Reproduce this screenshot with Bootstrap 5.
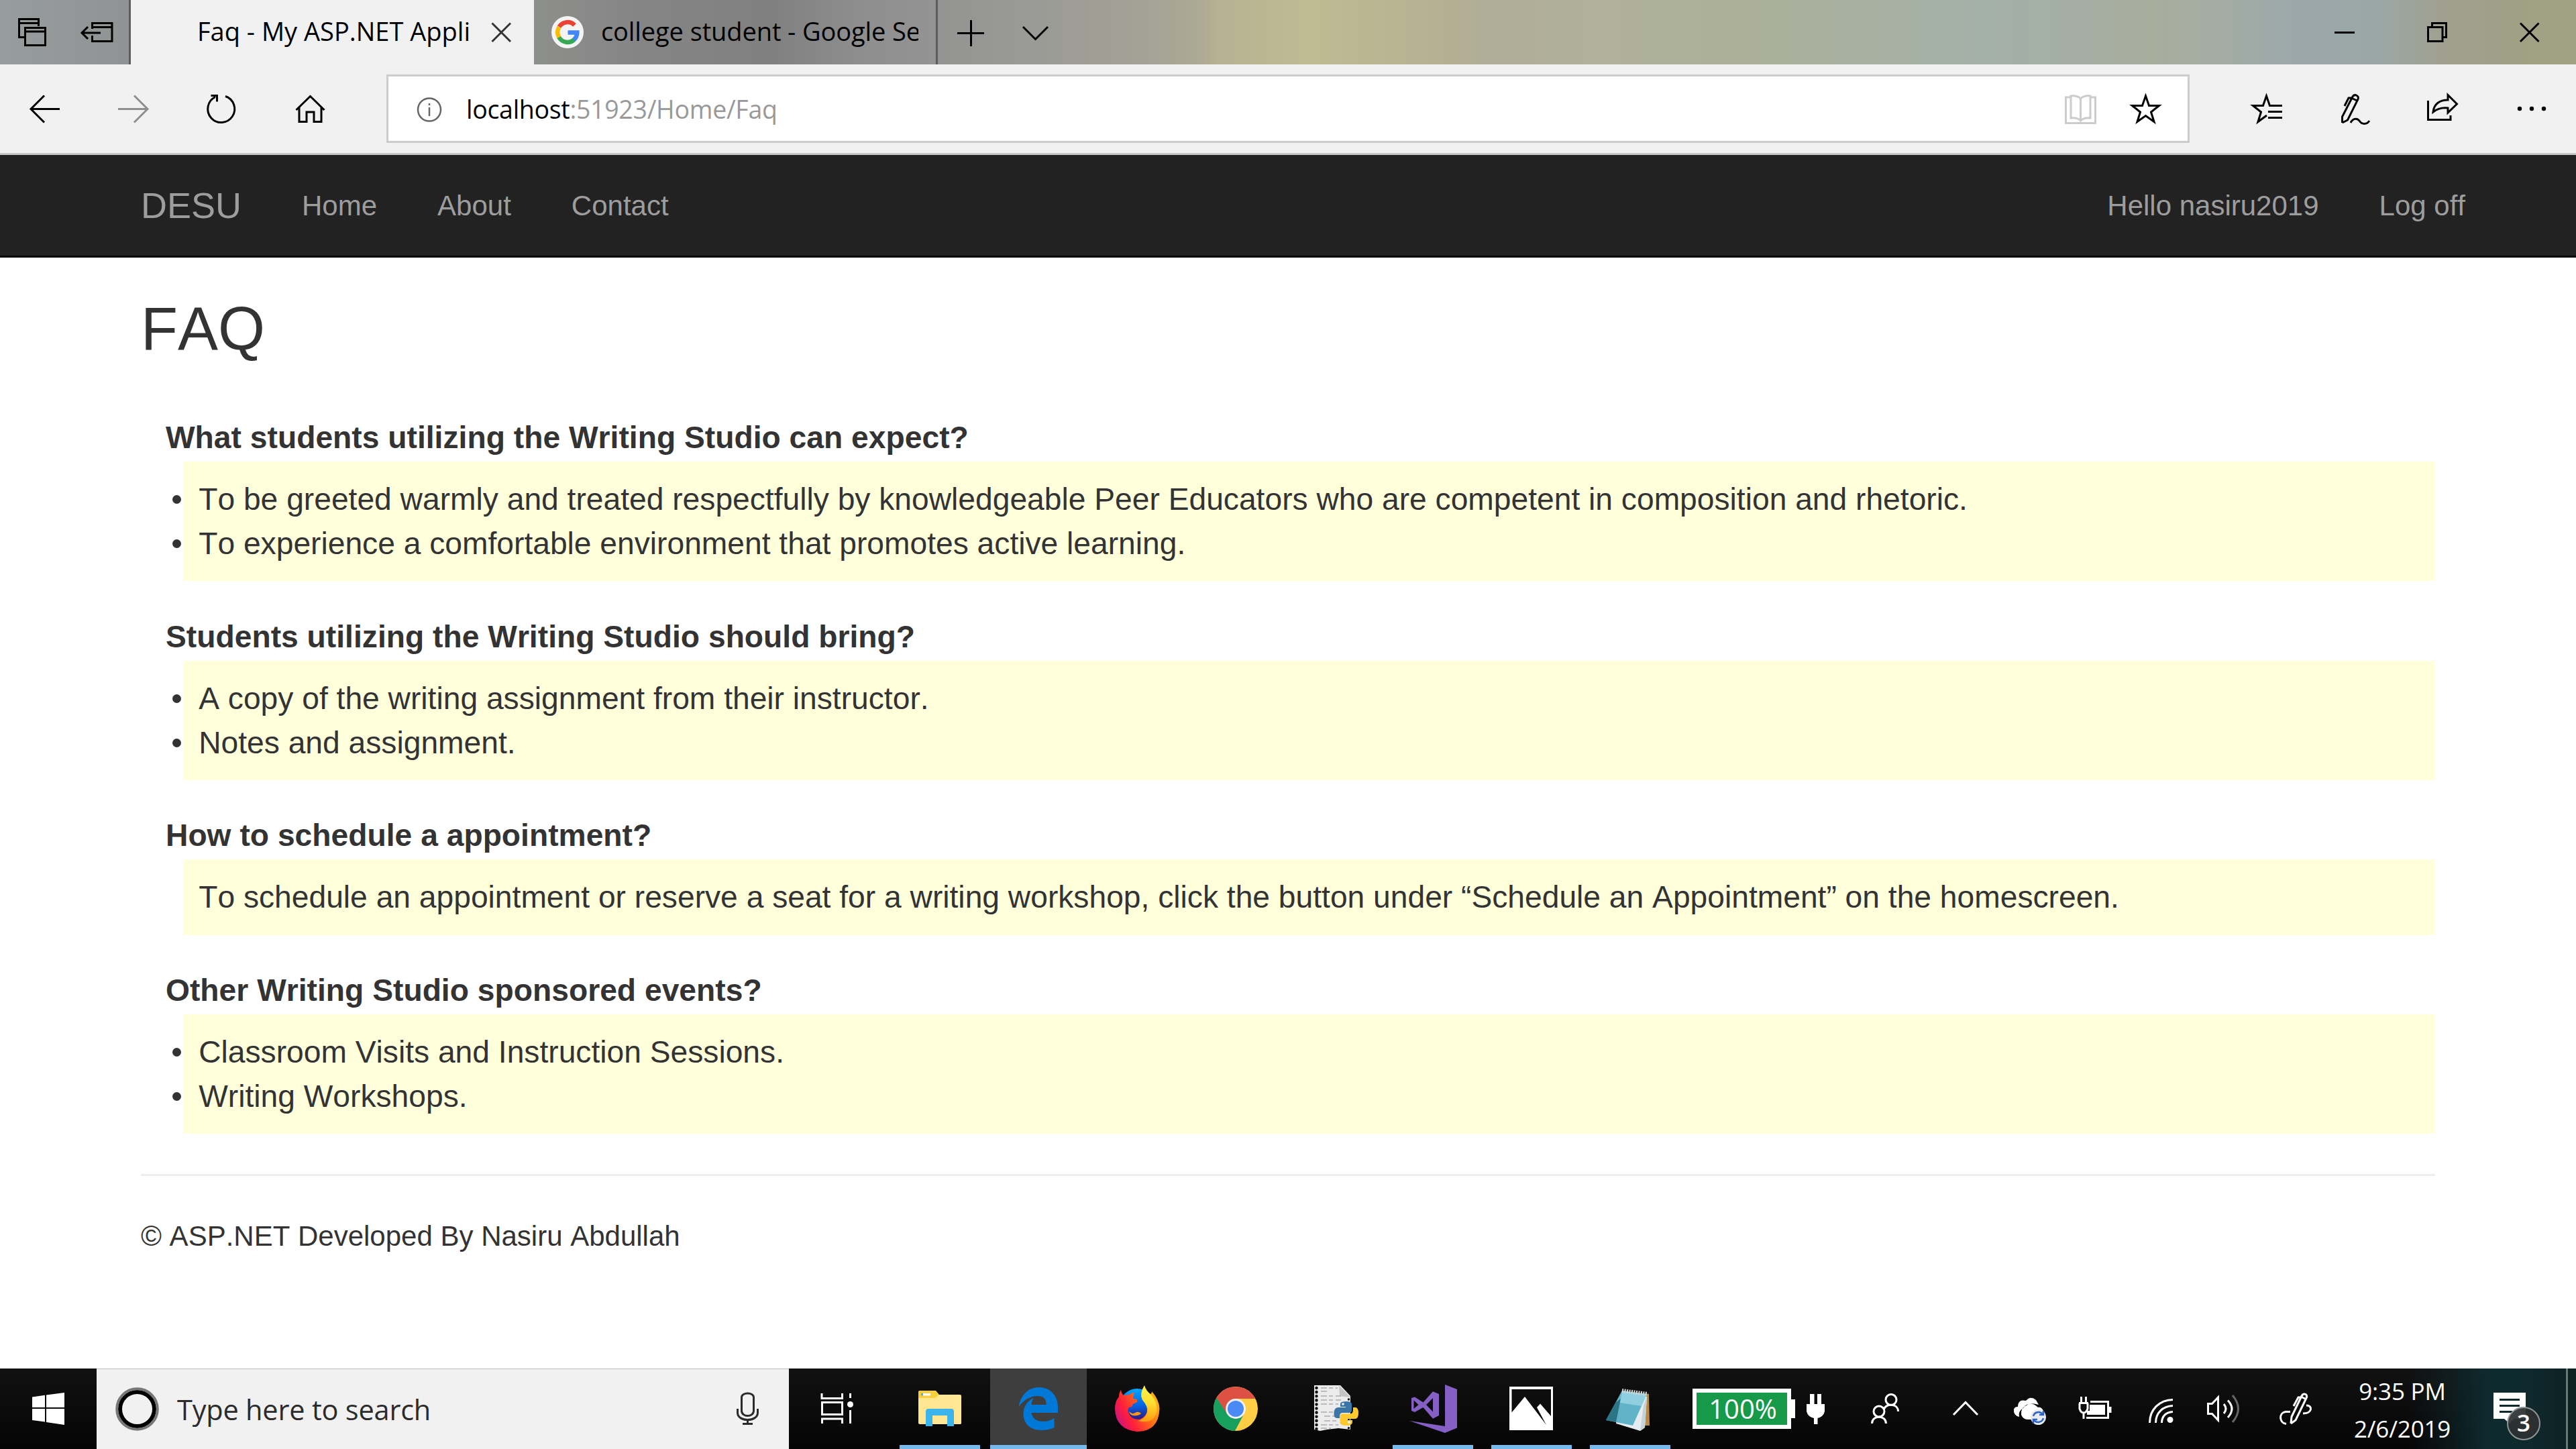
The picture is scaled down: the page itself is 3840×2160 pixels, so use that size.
<!DOCTYPE html>
<html lang="en">
<head>
<meta charset="utf-8">
<title>Faq - My ASP.NET Application</title>
<link href="https://cdn.jsdelivr.net/npm/bootstrap@5.3.0/dist/css/bootstrap.min.css" rel="stylesheet">
<style>
  html, body { height: 2160px; margin: 0; overflow: hidden; }
  body { width: 3840px; font-family: "Liberation Sans", Arial, sans-serif; font-kerning: none; color: #333; background: #fff; font-size: 42px; line-height: 60px; }
  svg { display: block; flex: none; }
  .ui { font-family: "Open Sans", "Noto Sans", sans-serif; white-space: nowrap; color: #000; font-kerning: normal; }
  .ln { fill: none; stroke: #000; stroke-width: 3; }
  .wl { fill: none; stroke: #fff; stroke-width: 3; }

  .tabstrip { height: 96px; background: linear-gradient(90deg, #979c9d 0, #909394 195px, #8d8f8c 800px, #858585 950px, #808080 1150px, #8e8e8f 1280px, #989896 1500px, #a3a296 1700px, #ada994 1790px, #b6b192 1812px, #bfbb92 1950px, #b6b192 2130px, #b1ac97 2220px, #afb299 2400px, #adb098 2560px, #a3b0a8 2960px, #a5aea3 3120px, #a8ad9c 3200px, #a6ada1 3270px, #9aa8ab 3440px, #9ba7a5 3550px, #a0a090 3640px, #a0a085 3760px, #a0a285 3840px); }
  .tab-on { width: 601px; background: #f1f1f1; padding-left: 99px; }
  .tab-off { width: 602px; border-right: 3px solid #5c5c5c; }
  .tab-name { font-size: 38px; line-height: 92px; overflow: hidden; }
  .tab-on .tab-name { width: 410px; }
  .tab-off .tab-name { width: 473px; margin-left: 2px; letter-spacing: -.1px; }
  .divide { border-right: 3px solid #5c5c5c; }
  .toolbar { height: 135px; background: #f1f1f1; border-bottom: 3px solid #c8c8c8; }
  .address { width: 2688px; height: 102px; border: 3px solid #ccc; background: #fff; }
  .url { font-size: 37.5px; line-height: 101px; letter-spacing: -.3px; padding-left: 2px; }
  .url-path { color: #999; }

  .site-nav { height: 153px; background: #222; border-bottom: 3px solid #080808; padding: 1px 165px 0 210px; color: #9d9d9d; }
  .site-nav .navbar-brand { font-size: 54px; line-height: 149px; margin: 0 90px 0 0; padding: 0; color: #9d9d9d; }
  .site-nav .nav-link { font-size: 42px; line-height: 149px; padding: 0; color: #9d9d9d; }
  .gap-nav { gap: 90px; }

  .page { padding: 57px 210px 0; }
  .page h2 { font-size: 90px; line-height: 99px; font-weight: 400; margin: 0 0 79px; }
  .faq { font-size: 46.2px; line-height: 66px; margin: 0 0 0 37px; }
  .faq dt { margin-bottom: 3px; letter-spacing: .02px; }
  .faq dd { background: #ffffdc; padding: 23.2px; margin: 0 0 49.2px 26px; }
  .faq dd:last-child { margin-bottom: 0; }
  .faq li { display: flex; align-items: center; }
  .faq li::before { content: ""; width: 13px; height: 13px; border-radius: 50%; background: #333; margin: 1px 26px 0 -39px; }
  .page hr { margin: 60px 0 60px; border-top: 3px solid #eee; opacity: 1; }

  .taskbar { height: 120px; background: linear-gradient(90deg, rgba(15,42,46,0) 0, rgba(15,42,46,0) 3590px, rgba(15,42,46,.55) 3660px, #0f2a2e 3710px, #0f2a2d 3760px, #0e2022 3840px), linear-gradient(#111 0, #0b0b0b 50%, #050505 100%); }
  .search { width: 1032px; background: #f1f1f1; border-top: 1px solid #b8bcb8; }
  .search .ui { font-size: 41.5px; line-height: 121px; color: #2b2b2b; letter-spacing: -.2px; padding-left: 1px; }
  .clock { width: 168px; font-size: 35px; line-height: 56px; color: #fff; text-align: center; letter-spacing: -.2px; padding-top: 6px; }
  .pct { width: 147px; height: 60px; border: 6px solid #fff; background: #169a49; color: #fff; font-size: 40px; line-height: 48px; text-align: center; padding-left: 3px; }
  .count { width: 50px; height: 50px; border-radius: 50%; left: 56px; top: 57px; background: rgba(45,48,50,.93); border: 2px solid #909596; color: #fff; font-size: 35px; line-height: 44px; font-weight: 600; text-align: center; }
  .show-desktop { border-left: 3px solid #6c7779; }
</style>
<script src="https://cdn.jsdelivr.net/npm/bootstrap@5.3.0/dist/js/bootstrap.bundle.min.js"></script>
</head>
<body class="d-flex flex-column">

<!-- Browser tab strip -->
<div class="tabstrip d-flex flex-shrink-0">
  <svg width="96" height="96" viewBox="0 0 96 96"><path class="ln" d="M37 55.500H28.500V28.500H57.500V39M28 34.500H58M37.500 41.500H67.500V67.500H37.500ZM37 47H68"/></svg>
  <div class="divide"><svg width="96" height="96" viewBox="96 0 96 96"><path class="ln" d="M137.500 43V34.500H167V61.500H137.500V53M137 40.500H167M122 49H150M131 40L122 49L131 58"/></svg></div>
  <div class="tab-on d-flex">
    <div class="tab-name ui">Faq - My ASP.NET Appli</div>
    <svg class="ms-auto" width="92" height="96" viewBox="704 0 92 96"><path fill="none" stroke="#333" stroke-width="3" d="M733.500 34.500L761 62M761 34.500L733.500 62"/></svg>
  </div>
  <div class="tab-off d-flex">
    <svg width="98" height="96" viewBox="796 0 98 96"><circle cx="846" cy="48" r="24" fill="#f4f4f4"/>
      <g fill="none" stroke-width="6.500" transform="translate(-1 0)"><path stroke="#ea4335" d="M834.500 40A14.700 14.700 0 0 1 857.500 37.500"/><path stroke="#fbbc05" d="M834.500 40.200A14.700 14.700 0 0 0 834.500 55.800"/><path stroke="#34a853" d="M834.200 55.500A14.700 14.700 0 0 0 857 59"/><path stroke="#4285f4" d="M856.500 59.300A14.700 14.700 0 0 0 861.300 48.600H847.500"/></g></svg>
    <div class="tab-name ui">college student - Google Search</div>
  </div>
  <svg width="96" height="96" viewBox="1398 0 96 96"><path class="ln" d="M1427 49.500H1467M1447.500 30V69"/></svg>
  <svg width="96" height="96" viewBox="1494 0 96 96"><path class="ln" d="M1525 40L1543.500 58.500L1562 40"/></svg>
  <div class="d-flex ms-auto">
    <svg width="138" height="96" viewBox="3426 0 138 96"><path class="ln" d="M3480 48.500H3510"/></svg>
    <svg width="138" height="96" viewBox="3564 0 138 96"><path class="ln" d="M3619.500 40.500H3641V61.500H3619.500ZM3625.500 40V34.500H3646.500V55.500H3641"/></svg>
    <svg width="138" height="96" viewBox="3702 0 138 96"><path class="ln" d="M3757 34.500L3784.500 62M3784.500 34.500L3757 62"/></svg>
  </div>
</div>

<!-- Browser toolbar -->
<div class="toolbar d-flex align-items-center flex-shrink-0">
  <svg width="132" height="132" viewBox="0 96 132 132"><path class="ln" d="M89 162.500H46M66 142.500L46 162.500L66 182.500"/></svg>
  <svg width="132" height="132" viewBox="132 96 132 132"><path fill="none" stroke="#8f8f8f" stroke-width="3" d="M176 162.500H220M200 142.500L220 162.500L200 182.500"/></svg>
  <svg width="132" height="132" viewBox="264 96 132 132"><path class="ln" d="M336 143.500A20 20 0 1 1 321 144.500M314.500 142.500H323.500V151.500"/></svg>
  <svg width="180" height="132" viewBox="396 96 180 132"><path class="ln" d="M441.500 164L462.500 143.500L483.500 164M446 160V181.500H457V167H468V181.500H479V160"/></svg>
  <div class="address d-flex align-items-center">
    <svg width="114" height="96" viewBox="579 114 114 96"><circle cx="640" cy="163.500" r="17" fill="none" stroke="#666" stroke-width="2.500"/><path d="M640 160V173M640 154V157" stroke="#666" stroke-width="2.500"/></svg>
    <div class="url ui"><span>localhost</span><span class="url-path">:51923/Home/Faq</span></div>
    <div class="d-flex ms-auto">
      <svg width="96" height="96" viewBox="3054 114 96 96"><path d="M3087 145H3079.500V183.500H3123.500V145H3116M3101.500 147C3097 142.500 3091 142.500 3087 143V176C3092 175.500 3098 176 3101.500 180C3105 176 3111 175.500 3116 176V143C3112 142.500 3106 142.500 3101.500 147ZM3101.500 147V180" fill="none" stroke="#ccc" stroke-width="3"/></svg>
      <svg width="111" height="96" viewBox="3150 114 111 96"><path class="ln" d="M3198.500 143L3203.500 157.500H3218.500L3206.500 167L3211 181.500L3198.500 172.500L3186 181.500L3190.500 167L3178.500 157.500H3193.500Z"/></svg>
    </div>
  </div>
  <div class="d-flex ms-auto">
    <svg width="132" height="132" viewBox="3312 96 132 132"><path class="ln" d="M3402 157.500H3383.500L3378.500 143L3373.500 157.500H3358.500L3370.500 167L3366 181.500L3379 172M3381 166.500H3402M3381 175.500H3402"/></svg>
    <svg width="132" height="132" viewBox="3444 96 132 132"><path class="ln" d="M3491.500 183V174L3507 144C3510 139 3517 143 3515 148L3499.500 179L3491.500 183M3495 158L3501 146H3507M3505 146L3513.500 150M3504 183C3507 177 3513 175 3517 180C3521 186 3528 186 3532 180"/></svg>
    <svg width="132" height="132" viewBox="3576 96 132 132"><path class="ln" d="M3619.500 150V178.500H3653V172M3627 167C3628 155 3637 149 3649 149V141.500L3662.500 155L3649 168V161C3640 160 3632 163 3627 167Z"/></svg>
    <svg width="132" height="132" viewBox="3708 96 132 132"><circle cx="3756" cy="162" r="3.200"/><circle cx="3774" cy="162" r="3.200"/><circle cx="3792" cy="162" r="3.200"/></svg>
  </div>
</div>

<!-- Site navigation -->
<nav class="site-nav d-flex flex-shrink-0">
  <a class="navbar-brand" href="#">DESU</a>
  <div class="d-flex gap-nav">
    <a class="nav-link" href="#">Home</a><a class="nav-link" href="#">About</a><a class="nav-link" href="#">Contact</a>
  </div>
  <div class="d-flex gap-nav ms-auto">
    <a class="nav-link" href="#">Hello nasiru2019</a><a class="nav-link" href="#">Log off</a>
  </div>
</nav>

<!-- Page content -->
<main class="page flex-grow-1">
  <h2>FAQ</h2>
  <dl class="faq">
    <dt>What students utilizing the Writing Studio can expect?</dt>
    <dd><ul class="list-unstyled m-0"><li>To be greeted warmly and treated respectfully by knowledgeable Peer Educators who are competent in composition and rhetoric.</li><li>To experience a comfortable environment that promotes active learning.</li></ul></dd>
    <dt>Students utilizing the Writing Studio should bring?</dt>
    <dd><ul class="list-unstyled m-0"><li>A copy of the writing assignment from their instructor.</li><li>Notes and assignment.</li></ul></dd>
    <dt>How to schedule a appointment?</dt>
    <dd>To schedule an appointment or reserve a seat for a writing workshop, click the button under “Schedule an Appointment” on the homescreen.</dd>
    <dt>Other Writing Studio sponsored events?</dt>
    <dd><ul class="list-unstyled m-0"><li>Classroom Visits and Instruction Sessions.</li><li>Writing Workshops.</li></ul></dd>
  </dl>
  <hr>
  <footer>© ASP.NET Developed By Nasiru Abdullah</footer>
</main>

<!-- Desktop taskbar -->
<div class="taskbar d-flex flex-shrink-0">
  <svg width="144" height="120" viewBox="0 2040 144 120"><path fill="#fff" d="M48 2082.500L67 2079.700V2098H48ZM69 2079.400L96 2076V2098H69ZM48 2100H67V2119.500L48 2117ZM69 2100H96V2124L69 2120Z"/></svg>
  <div class="search d-flex">
    <svg width="119" height="119" viewBox="144 2041 119 119"><circle cx="204.500" cy="2100.500" r="25.500" fill="none" stroke="#000" stroke-width="6"/><circle cx="204.500" cy="2100.500" r="30.300" fill="none" stroke="#777" stroke-width="4"/></svg>
    <div class="ui">Type here to search</div>
    <svg class="ms-auto" width="120" height="119" viewBox="1056 2041 120 119"><path fill="none" stroke="#2b2b2b" stroke-width="3" d="M1105.500 2083C1105.500 2075 1123.500 2075 1123.500 2083V2103C1123.500 2113 1105.500 2113 1105.500 2103ZM1099.500 2100V2106C1099.500 2120 1129.500 2120 1129.500 2106V2100M1114.500 2116V2123M1107 2122.500H1122"/></svg>
  </div>
  <svg width="153" height="120" viewBox="1176 2040 153 120"><path class="wl" d="M1225 2077V2084.500H1255.500V2077M1225.500 2090.500H1255.500V2108.500H1225.500ZM1225.500 2122V2115H1255.500V2122M1267.500 2077V2084M1267.500 2102V2122"/><circle cx="1267.500" cy="2093.500" r="4.500" fill="#fff"/></svg>
  <svg width="147" height="120" viewBox="1329 2040 147 120"><path fill="#fbce3c" d="M1369 2074.500Q1369 2073 1371 2073H1395L1400 2079H1430V2100H1369Z"/><path fill="#ffe693" d="M1369 2104V2084H1394L1400 2079H1431Q1433 2079 1433 2081V2121.500Q1433 2123 1431 2123H1371Q1369 2123 1369 2121Z"/><path fill="#fff" d="M1373 2077H1387V2080.500H1373Z"/><path fill="#3ab4ea" d="M1373 2077H1376V2080.500H1373ZM1380 2126V2104Q1380 2100 1384 2100H1418Q1422 2100 1422 2104V2126H1412V2110H1390V2126Z"/><path fill="#76b9ed" d="M1341 2154H1461V2160H1341Z"/></svg>
  <svg width="144" height="120" viewBox="1476 2040 144 120"><path fill="#3e3e3e" d="M1476 2040H1620V2160H1476Z"/><path fill="#76b9ed" d="M1476 2154H1620V2160H1476Z"/><path fill="#0078d7" d="M1518.500 2097C1521 2081 1532 2068 1549 2068C1567 2068 1577 2082 1577 2097V2106H1537.500C1539 2115 1546 2119 1555 2119C1561 2119 1567 2117 1571.500 2114V2128C1565 2131 1559 2132 1552 2132C1535 2132 1525.500 2121 1525.500 2108C1525.500 2097 1531 2088 1541 2084C1538.500 2087 1537.800 2091 1537.500 2094H1559.500C1560 2085 1555 2081 1547 2081C1535 2081 1525 2088 1518.500 2097Z"/></svg>
  <svg width="150" height="120" viewBox="1620 2040 150 120"><defs>
    <linearGradient id="fxa" x1="0" y1=".8" x2="1" y2=".3"><stop offset="0" stop-color="#c0128c"/><stop offset=".3" stop-color="#ff1e3c"/><stop offset=".65" stop-color="#ff6a16"/><stop offset="1" stop-color="#ffb51a"/></linearGradient>
    <linearGradient id="fxb" x1="0" y1="0" x2="0" y2="1"><stop offset="0" stop-color="#00a8ff"/><stop offset=".5" stop-color="#0560df"/><stop offset=".9" stop-color="#33137d"/></linearGradient>
    <linearGradient id="fxc" x1="0" y1="0" x2="0" y2="1"><stop offset="0" stop-color="#fff44f"/><stop offset=".5" stop-color="#ffdc30"/><stop offset="1" stop-color="#ff9a12"/></linearGradient></defs>
    <circle cx="1695" cy="2096" r="26" fill="url(#fxb)"/>
    <path fill="url(#fxa)" d="M1671 2072Q1672 2078 1675 2080Q1681 2079 1684 2079Q1687 2076 1691 2076Q1689 2081 1689 2085L1695 2086V2090L1689 2093L1687 2097Q1680 2097 1682 2105Q1685 2116 1698 2116Q1711 2112 1711 2096L1714 2079Q1718 2076 1717 2074Q1728 2087 1728.500 2100Q1727 2134 1695 2134Q1663 2131 1662 2100Q1662 2089 1668 2082Q1668 2076 1671 2072Z"/>
    <path fill="#ff980e" d="M1683 2104Q1688 2109 1692 2106Q1697 2103 1701 2107Q1697 2111 1689 2110Q1684 2109 1683 2104Z"/>
    <path fill="url(#fxc)" d="M1706 2065Q1698 2078 1703 2087Q1712 2097 1710 2106Q1706 2116 1696 2118Q1718 2124 1724 2106Q1727 2092 1716 2079Q1708 2073 1706 2065Z"/></svg>
  <svg width="147" height="120" viewBox="1770 2040 147 120"><circle cx="1842" cy="2100" r="33" fill="#ffce44"/><path fill="#dd5144" d="M1813.500 2083.500A33 33 0 0 1 1870.500 2083.500L1870.800 2085H1842L1828 2108Z"/><path fill="#17a05d" d="M1813.500 2083.500L1829 2107.500L1842 2115L1854.500 2107.500L1841 2133A33 33 0 0 1 1813.500 2083.500Z"/><circle cx="1842" cy="2100" r="15" fill="#f1f1f1"/><circle cx="1842" cy="2100" r="12" fill="#4a8af4"/></svg>
  <svg width="147" height="120" viewBox="1917 2040 147 120"><path fill="#ececec" d="M1959 2065H1998L2013 2081V2131L1995 2129L1978 2131L1968 2133L1959 2131Z"/><path fill="#c4c4c4" d="M1996 2065L1997 2081L2013 2083Z"/><path stroke="#111" stroke-width="4.500" stroke-linecap="round" stroke-dasharray=".1 6" d="M1962.500 2069V2132"/><path stroke="#111" stroke-width="3.500" stroke-linecap="round" stroke-dasharray=".1 6" d="M2010.500 2086V2132"/><path stroke="#aaa" stroke-width="1.500" stroke-dasharray="9 3 6 4" d="M1969 2069H1994M1969 2074H1978M1969 2081H1999M1969 2087H1999M1969 2093H1995M1969 2105H1990M1974 2111H1994M1974 2118H1995M1969 2124H1995M1969 2129H1984"/><path fill="#3a76a8" d="M1998 2098V2092Q1999 2089 2007 2089Q2015 2089 2015 2093V2102Q2015 2106 2011 2106H2002Q1997 2106 1997 2111V2114H1993Q1988 2114 1988.500 2106Q1989 2098 1995 2098H2006V2097H1998Z"/><path fill="#fdc92c" d="M2017 2098H2021Q2025 2099 2025 2106Q2025 2115 2020 2115H2008V2117H2016V2120Q2016 2125 2006.500 2125Q1997.500 2125 1997.500 2120V2112Q1997.500 2107.500 2002 2107.500H2012Q2017 2107.500 2017 2102Z"/><circle cx="2002" cy="2093" r="1.800" fill="#fff"/><circle cx="2011" cy="2120" r="2" fill="#fff"/></svg>
  <svg width="147" height="120" viewBox="2064 2040 147 120"><path fill="#865fc5" fill-rule="evenodd" d="M2154 2064L2172 2071V2128.500L2154 2136L2101 2118L2154 2126ZM2104 2084L2109 2082.500L2121.500 2090.500L2136 2074.300L2145 2078V2110L2136 2114.700L2121.500 2098L2109 2105L2104 2103ZM2107.500 2087.500V2100L2114.500 2094ZM2136 2084L2126 2094L2136 2104.500Z"/><path fill="#76b9ed" d="M2076 2154H2196V2160H2076Z"/></svg>
  <svg width="147" height="120" viewBox="2211 2040 147 120"><path fill="#fff" fill-rule="evenodd" d="M2250 2067H2315V2132H2250ZM2253.500 2071V2105.500L2273 2082L2305 2124L2291 2098L2296 2092.500L2312 2111V2071Z"/><path fill="#76b9ed" d="M2223 2154H2343V2160H2223Z"/></svg>
  <svg width="153" height="120" viewBox="2358 2040 153 120"><path fill="#b98a45" d="M2452 2077L2458 2078L2459 2125H2448Z"/><path fill="#e6edf0" d="M2415 2078L2455 2082L2452 2128L2445 2133L2409 2122Z"/><path fill="#c4d2d8" d="M2450 2095L2455 2082L2452 2128L2445 2133Z"/><path fill="#61b3c9" d="M2418 2073L2455 2078L2434 2125L2394 2117Z"/><path fill="#2c7587" d="M2408 2091L2416 2085L2409 2120L2394 2117Z"/><path fill="#a3dce8" opacity=".7" d="M2418 2073L2455 2078L2447 2096L2415 2091Z"/><path stroke="#d5d5d5" stroke-width="6" stroke-dasharray="2 1.500" d="M2418 2073L2456 2078"/><path fill="#76b9ed" d="M2370 2154H2490V2160H2370Z"/></svg>
  <div class="d-flex align-items-center ps-2 ms-1"><div class="pct ui">100%</div></div>
  <svg width="80" height="120" viewBox="2670 2040 80 120"><path fill="#fff" d="M2670 2086H2676V2114H2670ZM2698 2078H2704.500V2093H2709V2078H2715V2093H2720V2104Q2718 2112 2709.500 2114V2123H2704V2114Q2695 2112 2693 2104V2093H2698Z"/></svg>
  <svg width="120" height="120" viewBox="2750 2040 120 120"><circle class="wl" cx="2801" cy="2104" r="8"/><circle class="wl" cx="2819" cy="2086.500" r="8"/><path class="wl" d="M2790.500 2122C2790.500 2109 2811.500 2109 2811.500 2122M2808.500 2101C2810 2092 2829.500 2091 2829.500 2104"/></svg>
  <svg width="100" height="120" viewBox="2870 2040 100 120"><path class="wl" d="M2912 2109L2930 2090.500L2948 2109"/></svg>
  <svg width="100" height="120" viewBox="2970 2040 100 120"><path fill="#fff" d="M3010 2112Q3001 2110 3002 2101Q3003 2097 3008 2097Q3008 2085 3020 2088Q3027 2080 3035 2087L3039 2094Q3022 2089 3016 2099Q3008 2104 3010 2112ZM3021 2095Q3012 2098 3013 2109Q3016 2116 3022 2116H3038Q3048 2112 3046 2103Q3043 2097 3038 2098Q3028 2089 3021 2095Z"/><circle cx="3038.500" cy="2112.500" r="11.500" fill="#e8eaee"/><path fill="none" stroke="#2b62c4" stroke-width="2.500" d="M3031 2111A8 8 0 0 1 3045 2108M3046 2103V2109H3040M3046 2114A8 8 0 0 1 3032 2117M3031 2122V2116H3037"/></svg>
  <svg width="100" height="120" viewBox="3070 2040 100 120"><path class="wl" d="M3116 2089.500H3142.500V2113.500H3110"/><path fill="#fff" d="M3143 2097H3147.500V2106H3143ZM3115 2094H3138V2109H3111V2103H3115Z"/><path class="wl" d="M3102.500 2082V2091M3109.500 2082V2091M3099 2091.500H3113M3100 2092V2100Q3102 2106 3106 2106Q3110 2106 3112 2100V2092M3106 2106V2115"/></svg>
  <svg width="94" height="120" viewBox="3170 2040 94 120"><path class="wl" d="M3204.500 2121C3204.500 2101 3219 2087 3239 2086.500M3213.500 2121C3213.500 2106 3224 2096 3239 2095.500M3222.500 2121C3222.500 2111 3229 2105 3239 2104.500"/><circle cx="3235" cy="2116.500" r="4.500" fill="#fff"/></svg>
  <svg width="100" height="120" viewBox="3264 2040 100 120"><path class="wl" d="M3291.500 2092.500H3297.500L3306.500 2083V2117L3297.500 2107.500H3291.500ZM3315 2093Q3321 2100 3315 2107M3321 2087.500Q3333 2100 3321 2113"/><path fill="none" stroke="#666" stroke-width="3" d="M3328 2080Q3345 2100 3328 2120"/></svg>
  <svg width="133" height="120" viewBox="3364 2040 133 120"><path class="wl" d="M3415 2122L3416 2112L3431 2081C3434 2075 3441 2079 3438 2084L3422 2117L3415 2122M3419 2096L3426 2083H3433M3430 2082L3438 2086M3414 2104.500H3407C3397 2106 3397 2121 3408 2122.500M3438 2095C3448 2095 3447 2107 3433 2107"/></svg>
  <div class="clock ui"><div>9:35 PM</div><div>2/6/2019</div></div>
  <div class="position-relative ms-3"><svg width="144" height="120" viewBox="3681 2040 144 120"><path fill="#fff" d="M3717 2076H3765V2115H3748L3741 2122L3733 2115H3717Z"/><path stroke="#0f2a2d" stroke-width="3" d="M3726 2086.500H3756M3726 2095.500H3756M3726 2104.500H3745"/></svg>
    <div class="count ui position-absolute">3</div></div>
  <div class="show-desktop"></div>
</div>
</body>
</html>
